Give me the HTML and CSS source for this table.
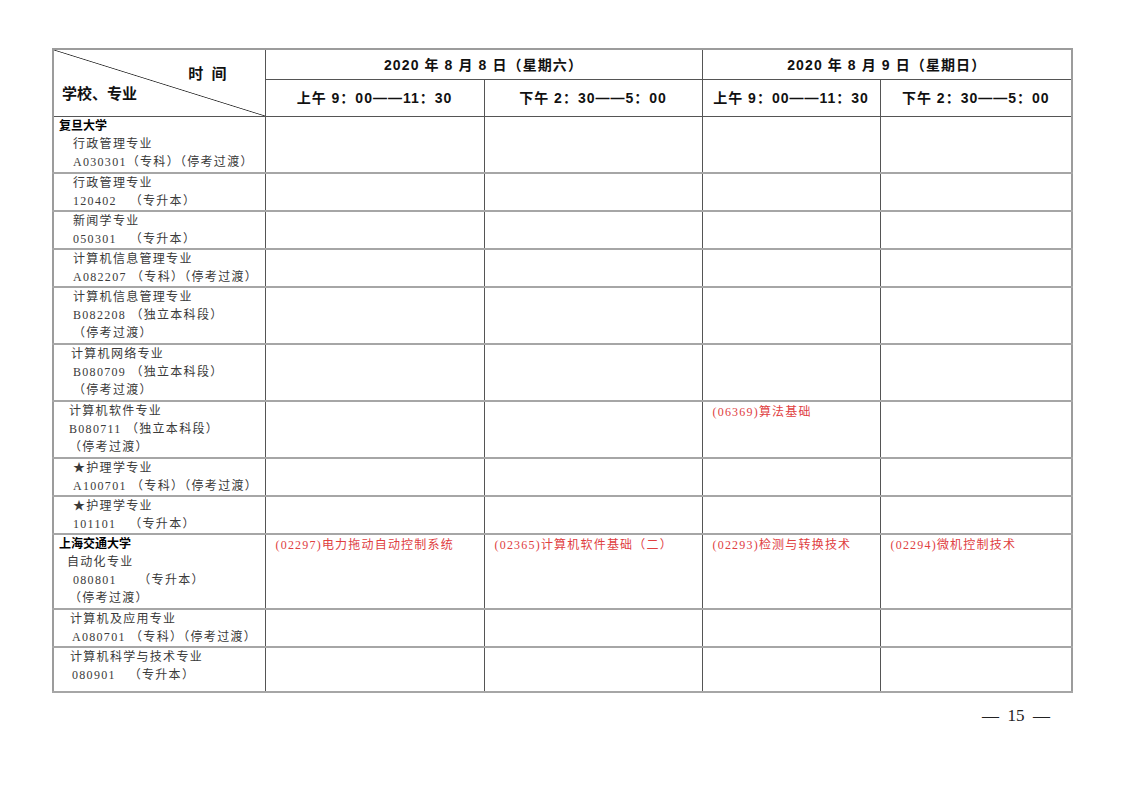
FILE: index.html
```html
<!DOCTYPE html>
<html lang="zh-CN">
<head>
<meta charset="utf-8">
<title>考试安排表</title>
<link rel="stylesheet" href="styles.css">
</head>
<body>
<div class="page">
<table class="sched">
  <colgroup>
    <col class="c0"><col class="c1"><col class="c2"><col class="c3"><col class="c4">
  </colgroup>
  <thead>
    <tr class="h1">
      <th class="diag" rowspan="2">
        <div class="diag-in">
          <span class="d-time">时&nbsp;&nbsp;间</span>
          <span class="d-school">学校、专业</span>
        </div>
      </th>
      <th colspan="2" class="day">2020 年 8 月 8 日（星期六）</th>
      <th colspan="2" class="day">2020 年 8 月 9 日（星期日）</th>
    </tr>
    <tr class="h2">
      <th class="slot">上午 9：00——11：30</th>
      <th class="slot">下午 2：30——5：00</th>
      <th class="slot">上午 9：00——11：30</th>
      <th class="slot">下午 2：30——5：00</th>
    </tr>
  </thead>
  <tbody>
    <tr class="r3 first">
      <td class="name"><div class="ln uni">复旦大学</div><div class="ln i16">行政管理专业</div><div class="ln i16">A030301（专科）（停考过渡）</div></td>
      <td></td><td></td><td></td><td></td>
    </tr>
    <tr class="r2">
      <td class="name"><div class="ln i16">行政管理专业</div><div class="ln i16">120402&nbsp;&nbsp; （专升本）</div></td>
      <td></td><td></td><td></td><td></td>
    </tr>
    <tr class="r2">
      <td class="name"><div class="ln i16">新闻学专业</div><div class="ln i16">050301&nbsp;&nbsp; （专升本）</div></td>
      <td></td><td></td><td></td><td></td>
    </tr>
    <tr class="r2">
      <td class="name"><div class="ln i16">计算机信息管理专业</div><div class="ln i16">A082207 （专科）（停考过渡）</div></td>
      <td></td><td></td><td></td><td></td>
    </tr>
    <tr class="r3">
      <td class="name"><div class="ln i16">计算机信息管理专业</div><div class="ln i16">B082208 （独立本科段）</div><div class="ln i16">（停考过渡）</div></td>
      <td></td><td></td><td></td><td></td>
    </tr>
    <tr class="r3">
      <td class="name"><div class="ln i14">计算机网络专业</div><div class="ln i16">B080709 （独立本科段）</div><div class="ln i16">（停考过渡）</div></td>
      <td></td><td></td><td></td><td></td>
    </tr>
    <tr class="r3">
      <td class="name"><div class="ln i12">计算机软件专业</div><div class="ln i12">B080711 （独立本科段）</div><div class="ln i12">（停考过渡）</div></td>
      <td></td><td></td>
      <td class="exam">(06369)算法基础</td>
      <td></td>
    </tr>
    <tr class="r2">
      <td class="name"><div class="ln i16">★护理学专业</div><div class="ln i16">A100701 （专科）（停考过渡）</div></td>
      <td></td><td></td><td></td><td></td>
    </tr>
    <tr class="r2">
      <td class="name"><div class="ln i16">★护理学专业</div><div class="ln i16">101101&nbsp;&nbsp; （专升本）</div></td>
      <td></td><td></td><td></td><td></td>
    </tr>
    <tr class="r4">
      <td class="name"><div class="ln uni">上海交通大学</div><div class="ln i10">自动化专业</div><div class="ln i16">080801&nbsp;&nbsp;&nbsp;&nbsp; （专升本）</div><div class="ln i12">（停考过渡）</div></td>
      <td class="exam">(02297)电力拖动自动控制系统</td>
      <td class="exam">(02365)计算机软件基础（二）</td>
      <td class="exam">(02293)检测与转换技术</td>
      <td class="exam">(02294)微机控制技术</td>
    </tr>
    <tr class="r2">
      <td class="name"><div class="ln i13">计算机及应用专业</div><div class="ln i15">A080701 （专科）（停考过渡）</div></td>
      <td></td><td></td><td></td><td></td>
    </tr>
    <tr class="rlast">
      <td class="name"><div class="ln i13">计算机科学与技术专业</div><div class="ln i15">080901&nbsp;&nbsp; （专升本）</div></td>
      <td></td><td></td><td></td><td></td>
    </tr>
  </tbody>
</table>
<div class="folio">—&nbsp;&nbsp;15&nbsp;&nbsp;—</div>
</div>
</body>
</html>
```

FILE: styles.css
```css
html, body {
  margin: 0;
  padding: 0;
  background: #ffffff;
}

body {
  font-family: "Liberation Serif", "Noto Sans CJK SC", serif;
  color: #3a3a3a;
}

.page {
  padding: 48px 0 0 52px;
  width: 1019px;
}

.sched {
  border-collapse: collapse;
  table-layout: fixed;
  width: 1019px;
  border: 2px solid #9c9c9c;
}

.c0 { width: 212px; }
.c1 { width: 219px; }
.c2 { width: 218px; }
.c3 { width: 178px; }
.c4 { width: 192px; }

.sched th,
.sched td {
  border-left: 1px solid #555555;
  border-right: 1px solid #555555;
  padding: 0;
  vertical-align: top;
}

/* header */
.sched th {
  font-family: "Liberation Sans", "Noto Sans CJK SC", sans-serif;
  font-weight: 700;
  color: #111111;
  font-size: 14px;
  line-height: 18px;
  vertical-align: middle;
  text-align: center;
  border-top: 1px solid #555555;
  border-bottom: 1px solid #555555;
}

.h1 { height: 30px; }
.h2 { height: 36px; }

.day {
  letter-spacing: 1.1px;
}

.slot {
  letter-spacing: 1px;
}

.sched th.diag {
  padding: 0;
  vertical-align: top;
  border-left: 2px solid #9c9c9c;
  border-top: 2px solid #9c9c9c;
  background: linear-gradient(to top right,
    transparent calc(50% - 0.8px),
    #333333 50%,
    transparent calc(50% + 0.8px));
}

.diag-in {
  height: 66px;
  display: flex;
  flex-direction: column;
  justify-content: flex-start;
  text-align: left;
  font-size: 15px;
}

.d-time {
  align-self: flex-end;
  margin: 14px 38px 0 0;
  line-height: 20px;
}

.d-school {
  margin: 0 0 0 8px;
  line-height: 20px;
}

/* body rows */
.sched tbody td {
  border-top: 2px solid #a6a6a6;
  border-bottom: 2px solid #a6a6a6;
  font-size: 12px;
  line-height: 18px;
  letter-spacing: 1.3px;
}

.sched tbody tr:first-child td {
  border-top: 1px solid #555555;
}

.r2 { height: 37px; }
.r3 { height: 57px; }
.r3.first { height: 56px; }
.r4 { height: 75px; }
.rlast { height: 45px; }

.name {
  padding: 1px 0 0 0;
}

.ln {
  height: 18px;
  white-space: nowrap;
}

.uni {
  font-weight: 700;
  color: #000000;
  padding-left: 5px;
  letter-spacing: 0;
}

.i10 { padding-left: 13px; }
.i12 { padding-left: 15px; }
.i13 { padding-left: 16px; }
.i14 { padding-left: 17px; }
.i15 { padding-left: 18px; }
.i16 { padding-left: 19px; }

.sched td.exam {
  color: #e0403f;
  padding: 1px 0 0 10px;
  white-space: nowrap;
  letter-spacing: 1.2px;
}

.folio {
  margin-top: 13px;
  text-align: right;
  padding-right: 21px;
  font-family: "Liberation Serif", "DejaVu Serif", serif;
  font-size: 17px;
  line-height: 20px;
  color: #222222;
}
```
